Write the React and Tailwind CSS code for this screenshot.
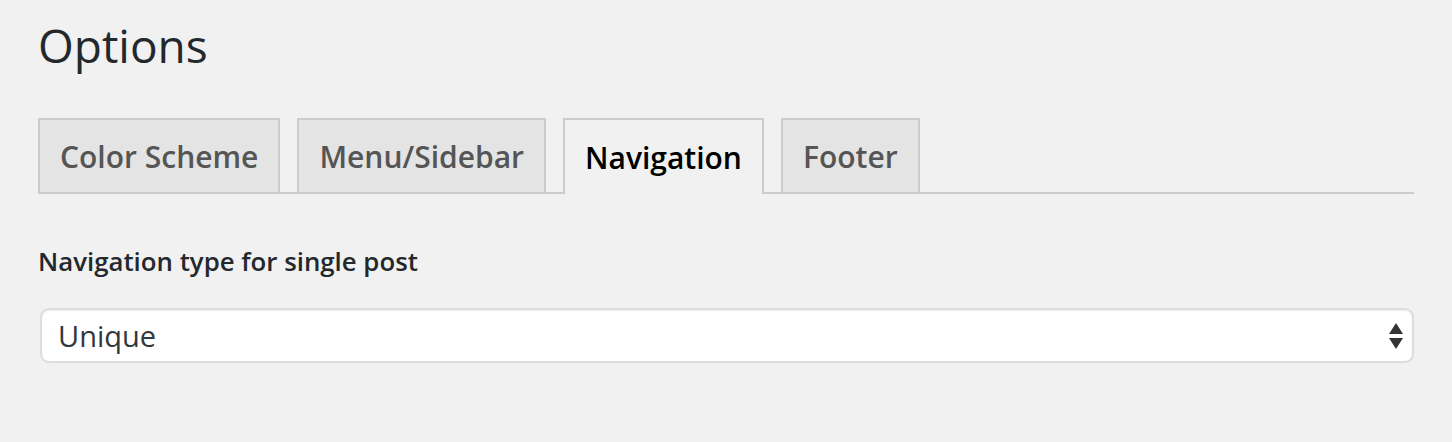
import React, { useState } from "react";

const tabs = ["Color Scheme", "Menu/Sidebar", "Navigation", "Footer"];

export default function App() {
    const [active, setActive] = useState("Navigation");

    return (
        <div className="min-h-[442px] bg-[#f1f1f1] pl-[38px] pr-[38px] pt-[14px] font-['Open_Sans',sans-serif] text-[#23282d]">
            <h1 className="text-[46px] leading-[62px] font-normal text-[#23282d]">Options</h1>

            <div className="mt-[42px] flex items-end gap-[17px] border-b-2 border-[#cccccc]">
                {tabs.map(tab => (
                    <button
                        key={tab}
                        onClick={() => setActive(tab)}
                        className={
                            tab === active
                                ? "-mb-[2px] h-[76px] border-2 border-b-0 border-[#cccccc] bg-[#f1f1f1] px-[20px] text-[30px] font-semibold text-black"
                                : "h-[74px] border-2 border-b-0 border-[#cccccc] bg-[#e4e4e4] px-[20px] text-[30px] font-semibold text-[#555555]"
                        }
                    >
                        {tab}
                    </button>
                ))}
            </div>

            <label className="mt-[49px] block text-[25.8px] font-semibold leading-[36px] text-[#23282d]">
                Navigation type for single post
            </label>

            <div className="relative mt-[29px] ml-[2px]">
                <select className="h-[55px] w-full appearance-none rounded-[9px] border-2 border-[#dddddd] bg-white pl-[16px] text-[29px] text-[#32373c] shadow-[inset_0_1px_2px_rgba(0,0,0,0.07)] outline-none">
                    <option>Unique</option>
                    <option>Default</option>
                </select>
                <svg className="pointer-events-none absolute right-[11px] top-1/2 -translate-y-1/2" width="14" height="26" viewBox="0 0 14 26">
                    <path d="M7 0 L14 11 L0 11 Z" fill="#333" />
                    <path d="M0 15 L14 15 L7 26 Z" fill="#333" />
                </svg>
            </div>
        </div>
    );
}
